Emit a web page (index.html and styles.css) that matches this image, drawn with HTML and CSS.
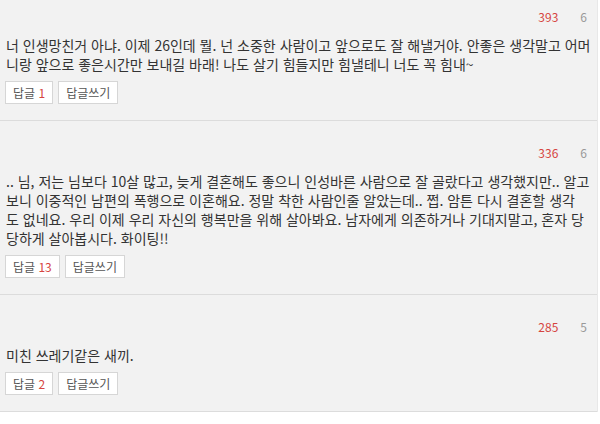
FILE: index.html
```html
<!DOCTYPE html>
<html lang="ko">
<head>
<meta charset="utf-8">
<link rel="stylesheet" href="styles.css">
</head>
<body>
<div class="list">
  <div class="comment first">
    <div class="meta"><span class="up">393</span><span class="down">6</span></div>
    <p class="text">너 인생망친거 아냐. 이제 26인데 뭘. 넌 소중한 사람이고 앞으로도 잘 해낼거야. 안좋은 생각말고 어머<br>니랑 앞으로 좋은시간만 보내길 바래! 나도 살기 힘들지만 힘낼테니 너도 꼭 힘내~</p>
    <div class="actions"><span class="btn">답글 <em>1</em></span><span class="btn">답글쓰기</span></div>
  </div>
  <div class="comment">
    <div class="meta"><span class="up">336</span><span class="down">6</span></div>
    <p class="text">.. 님, 저는 님보다 10살 많고, 늦게 결혼해도 좋으니 인성바른 사람으로 잘 골랐다고 생각했지만.. 알고<br>보니 이중적인 남편의 폭행으로 이혼해요. 정말 착한 사람인줄 알았는데.. 쩝. 암튼 다시 결혼할 생각<br>도 없네요. 우리 이제 우리 자신의 행복만을 위해 살아봐요. 남자에게 의존하거나 기대지말고, 혼자 당<br>당하게 살아봅시다. 화이팅!!</p>
    <div class="actions"><span class="btn">답글 <em>13</em></span><span class="btn">답글쓰기</span></div>
  </div>
  <div class="comment">
    <div class="meta"><span class="up">285</span><span class="down">5</span></div>
    <p class="text">미친 쓰레기같은 새끼.</p>
    <div class="actions"><span class="btn">답글 <em>2</em></span><span class="btn">답글쓰기</span></div>
  </div>
</div>
</body>
</html>
```
FILE: styles.css
```css
html, body {
  margin: 0;
  padding: 0;
  background: #fff;
}
body {
  font-family: "Noto Sans CJK KR", "Noto Sans", sans-serif;
  color: #333;
}
.list {
  width: 597px;
  border-right: 1px solid #e8e8e8;
}
.comment {
  background: #f2f2f2;
  border-bottom: 1px solid #dcdcdc;
  padding: 0 10px 16px 5px;
}
.meta {
  display: flex;
  justify-content: flex-end;
  gap: 22px;
  padding-top: 22px;
  height: 19px;
  line-height: 19px;
  font-size: 12px;
}
.first .meta {
  padding-top: 7px;
}
.up {
  color: #d64541;
}
.down {
  color: #999;
}
.text {
  margin: 10px -6px 0 0;
  padding-left: 1px;
  font-size: 14px;
  line-height: 19px;
  letter-spacing: 0;
  white-space: nowrap;
}
.actions {
  display: flex;
  gap: 5px;
  margin-top: 7px;
}
.btn {
  display: inline-block;
  height: 21px;
  line-height: 21px;
  padding: 0 7px;
  border: 1px solid #d6d6d6;
  background: #fff;
  font-size: 12px;
  color: #555;
}
.btn em {
  font-style: normal;
  color: #d64541;
}
```
